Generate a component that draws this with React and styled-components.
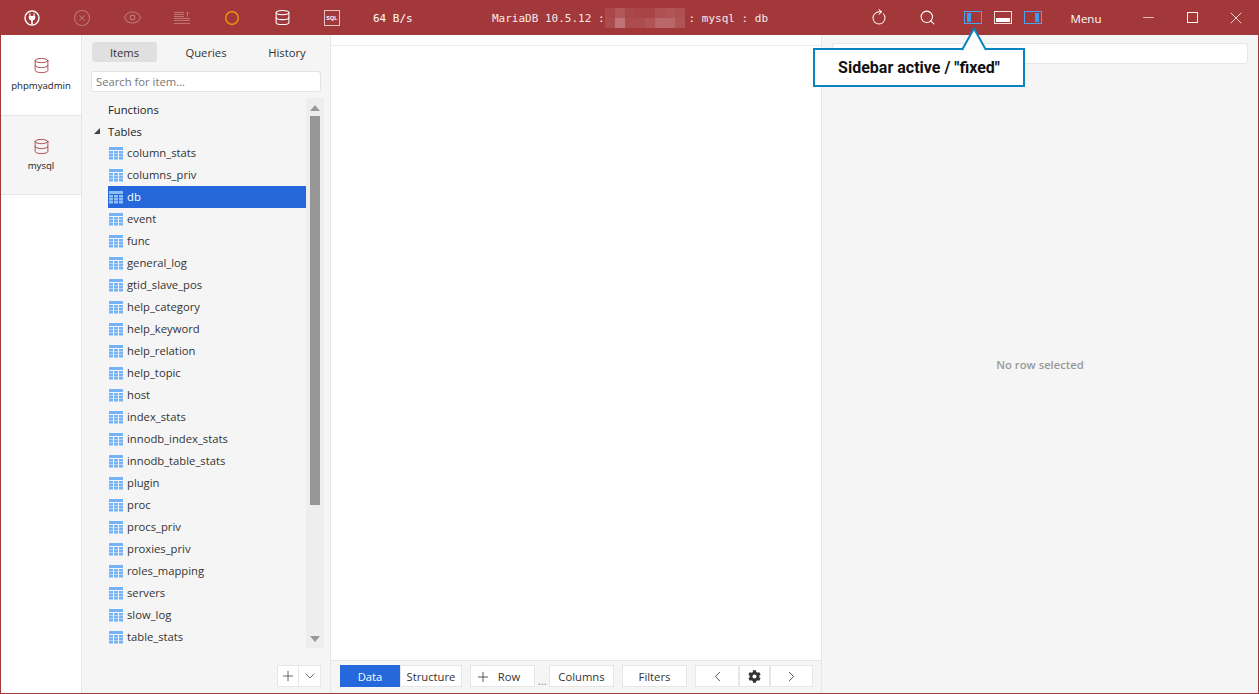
import React from "react";
import styled, {createGlobalStyle} from "styled-components";
import {CircleX, Eye, Database, RotateCw, Search, Minus, X, Plus, ChevronDown, ChevronLeft, ChevronRight} from "lucide-react";
import {FaCog} from "react-icons/fa";

const TABLES = [
    "column_stats", "columns_priv", "db", "event", "func", "general_log", "gtid_slave_pos",
    "help_category", "help_keyword", "help_relation", "help_topic", "host", "index_stats",
    "innodb_index_stats", "innodb_table_stats", "plugin", "proc", "procs_priv", "proxies_priv",
    "roles_mapping", "servers", "slow_log", "table_stats",
];

// pixelated block that hides the host name
const BLUR = [
    .08, .16, .08, .06, .06, .12, .14, .12,
    .1, .3, .1, .1, .14, .24, .24, .14,
];

const PlugIcon = () => (
    <svg width="16" height="16" viewBox="0 0 16 16">
        <circle cx="8" cy="8" r="7" fill="none" stroke="#fff" strokeWidth="1.4"/>
        <path d="M6 3.5v2.5M10 3.5v2.5" stroke="#fff" strokeWidth="1.2"/>
        <path d="M4.8 6h6.4v2.2a3.2 3.2 0 0 1-2.4 2.4V14H7.200v-3.400A3.200 3.200 0 0 1 4.800 8.200z" fill="#fff"/>
    </svg>
);

const ListIcon = () => (
    <svg width="16" height="14" viewBox="0 0 16 14" stroke="#fff" strokeWidth="1">
        <path d="M0 1.500h10M0 3.500h10M0 5.500h10M0 7.500h16M0 9.500h16M0 12.500h16"/>
        <path d="M13.500 5.500V1M12 2.500l1.500-1.500 1.500 1.500" fill="none"/>
    </svg>
);

const RingIcon = () => (
    <svg width="14" height="14" viewBox="0 0 14 14">
        <circle cx="7" cy="7" r="6.300" fill="none" stroke="#f59e0b" strokeWidth="1.300"/>
    </svg>
);

const TableIcon = ({$active}) => (
    <svg width="14" height="14" viewBox="0 0 14 14">
        <rect y="1" width="14" height="3" fill={$active ? "#8fc0f5" : "#74b3f7"}/>
        {[5, 8, 11].map(y => [0, 5, 10].map(x => (
            <rect key={`${x}-${y}`} x={x} y={y} width="4" height="2.500" fill={$active ? "#8fc0f5" : "#74b3f7"}/>
        )))}
    </svg>
);

const LayoutIcon = ({side}) => (
    <LayoutFrame $active={side !== "bottom"}>
        <LayoutFill $side={side}/>
    </LayoutFrame>
);

const App = () => {
    return (
        <Window>
            <GlobalStyle/>
            <TitleBar>
                <IconSlot><PlugIcon/></IconSlot>
                <IconSlot $dim><CircleX size={18} strokeWidth={1.400}/></IconSlot>
                <IconSlot $dim><Eye size={19} strokeWidth={1.400}/></IconSlot>
                <IconSlot $dim><ListIcon/></IconSlot>
                <IconSlot><RingIcon/></IconSlot>
                <IconSlot><Database size={17} strokeWidth={1.500}/></IconSlot>
                <IconSlot><SqlIcon><span>SQL</span></SqlIcon></IconSlot>
                <Speed>64 B/s</Speed>
                <Title>
                    MariaDB 10.5.12 :
                    <Pixelated>
                        {BLUR.map((a, i) => <i key={i} style={{opacity: a}}/>)}
                    </Pixelated>
                    : mysql : db
                </Title>
                <RightIcons>
                    <ToolIcon><RotateCw size={16} strokeWidth={1.500} style={{transform: "rotate(-45deg)"}}/></ToolIcon>
                    <ToolIcon><Search size={17} strokeWidth={1.500}/></ToolIcon>
                    <LayoutIcons>
                        <LayoutIcon side="left"/>
                        <LayoutIcon side="bottom"/>
                        <LayoutIcon side="right"/>
                    </LayoutIcons>
                    <MenuLabel>Menu</MenuLabel>
                    <WinButton><Minus size={17} strokeWidth={1}/></WinButton>
                    <WinButton><MaxBox/></WinButton>
                    <WinButton><X size={20} strokeWidth={1}/></WinButton>
                </RightIcons>
            </TitleBar>

            <Body>
                <Rail>
                    <RailItem $active>
                        <Database size={17} strokeWidth={1.200} color="#a3383b"/>
                        <span>phpmyadmin</span>
                    </RailItem>
                    <RailItem>
                        <Database size={17} strokeWidth={1.200} color="#a3383b"/>
                        <span>mysql</span>
                    </RailItem>
                    <RailRest/>
                </Rail>

                <Sidebar>
                    <Tabs>
                        <Tab $active $w="65px">Items</Tab>
                        <Tab $w="98px">Queries</Tab>
                        <Tab $w="64px">History</Tab>
                    </Tabs>
                    <SearchInput placeholder="Search for item..."/>
                    <TreeWrap>
                        <Tree>
                            <TreeHead>Functions</TreeHead>
                            <TreeHead><Caret/>Tables</TreeHead>
                            {TABLES.map(name => (
                                <TreeRow key={name} $active={name === "db"}>
                                    <TableIcon $active={name === "db"}/>
                                    <RowLabel>{name}</RowLabel>
                                </TreeRow>
                            ))}
                        </Tree>
                        <Scrollbar>
                            <ArrowUp/>
                            <Thumb/>
                            <ArrowDown/>
                        </Scrollbar>
                    </TreeWrap>
                    <SidebarFoot>
                        <SmallBtn><Plus size={16} strokeWidth={1.200}/></SmallBtn>
                        <SmallBtn><ChevronDown size={16} strokeWidth={1.200}/></SmallBtn>
                    </SidebarFoot>
                </Sidebar>

                <Main>
                    <MainHead/>
                    <MainBody/>
                    <BottomBar>
                        <Joined>
                            <BarBtn $primary $w="60px">Data</BarBtn>
                            <BarBtn $w="62px">Structure</BarBtn>
                        </Joined>
                        <BarBtn $w="65px" $ml="8px"><Plus size={16} strokeWidth={1.200}/><RowText>Row</RowText></BarBtn>
                        <Dots>...</Dots>
                        <BarBtn $w="65px">Columns</BarBtn>
                        <BarBtn $w="65px" $ml="8px">Filters</BarBtn>
                        <Joined $ml="8px">
                            <BarBtn $w="44px"><ChevronLeft size={17} strokeWidth={1.200}/></BarBtn>
                            <BarBtn $w="31px"><FaCog size={13} color="#333"/></BarBtn>
                            <BarBtn $w="43px"><ChevronRight size={17} strokeWidth={1.200}/></BarBtn>
                        </Joined>
                    </BottomBar>
                </Main>

                <Detail>
                    <DetailSearch/>
                    <Empty>No row selected</Empty>
                </Detail>
            </Body>

            <Callout>
                <CalloutArrow viewBox="0 0 26 24" width="26" height="24">
                    <path d="M1 23 L13 1.500 L25 23" fill="#fff" stroke="#0a84c1" strokeWidth="2"/>
                </CalloutArrow>
                Sidebar active / "fixed"
            </Callout>
        </Window>
    )
}

const GlobalStyle = createGlobalStyle`
  html, body {
    margin: 0;
    height: 100%;
    overflow: hidden;
  }

  body {
    font-family: "Open Sans", "Noto Sans", sans-serif;
    font-size: 11.25px;
    color: #333;
  }
`

const Window = styled('div')`
  position: relative;
  width: 1259px;
  height: 694px;
  box-sizing: border-box;
  border: 1px solid #a3383b;
  border-top: none;
  display: flex;
  flex-direction: column;
  background: #fff;
`

const TitleBar = styled('div')`
  height: 35px;
  flex: none;
  margin: 0 -1px;
  padding: 0 1px 0 7px;
  background: #a3383b;
  color: #fff;
  display: flex;
  align-items: center;
`

const IconSlot = styled('div')`
  width: 50px;
  height: 35px;
  display: flex;
  align-items: center;
  justify-content: center;
  color: #fff;
  opacity: ${p => p.$dim ? 0.3 : 1};
`

const SqlIcon = styled('div')`
  width: 12px;
  height: 12px;
  padding: 1px;
  border: 1px solid rgba(255, 255, 255, .7);
  display: flex;
  align-items: center;
  justify-content: center;

  span {
    font: bold 5.500px "Liberation Sans", sans-serif;
  }
`

const Speed = styled('div')`
  width: 135px;
  padding: 2px 0 0 16px;
  box-sizing: border-box;
  font: 11px "DejaVu Sans Mono", monospace;
  white-space: pre;
  color: #fff;
`

const Title = styled('div')`
  padding-top: 2px;
  font: 11px "DejaVu Sans Mono", monospace;
  color: #f6e9e9;
  display: flex;
  align-items: center;
  white-space: pre;
`

const Pixelated = styled('div')`
  display: grid;
  grid-template-columns: repeat(8, 10px);
  grid-auto-rows: 10px;
  margin: -2px 4px 0 0;

  i {
    display: block;
    background: #fff;
  }
`

const RightIcons = styled('div')`
  margin-left: auto;
  display: flex;
  align-items: center;
  height: 35px;
`

const ToolIcon = styled('div')`
  width: 48px;
  display: flex;
  justify-content: center;
  color: #fff;
`

const LayoutIcons = styled('div')`
  display: flex;
  gap: 12px;
  margin: 0 4px 0 13px;
`

const LayoutFrame = styled('div')`
  width: 18px;
  height: 13px;
  box-sizing: border-box;
  border: 1px solid ${p => p.$active ? "#4ba3f0" : "#f3dede"};
  position: relative;
`

const LayoutFill = styled('div')`
  position: absolute;
  background: ${p => p.$side === "bottom" ? "#fff" : "#3d9cf0"};
  ${p => p.$side === "left" && "left: 2px; top: 1px; bottom: 1px; width: 4px;"}
  ${p => p.$side === "right" && "right: 2px; top: 1px; bottom: 1px; width: 4px;"}
  ${p => p.$side === "bottom" && "left: 1px; right: 1px; bottom: 1px; height: 4px;"}
`

const MenuLabel = styled('div')`
  width: 80px;
  padding-top: 2px;
  text-align: center;
  font-size: 11.500px;
  color: #fff;
`

const WinButton = styled('div')`
  width: 44px;
  display: flex;
  justify-content: center;
  color: #fff;
  opacity: .95;
`

const MaxBox = styled('div')`
  width: 11px;
  height: 11px;
  box-sizing: border-box;
  border: 1px solid #fff;
`

const Body = styled('div')`
  flex: 1;
  min-height: 0;
  display: flex;
`

const Rail = styled('div')`
  width: 81px;
  flex: none;
  display: flex;
  flex-direction: column;
  background: #fff;
  border-right: 1px solid #e6e6e6;
  box-sizing: border-box;
`

const RailItem = styled('div')`
  height: ${p => p.$active ? "81px" : "79px"};
  box-sizing: border-box;
  padding-top: 22px;
  display: flex;
  flex-direction: column;
  align-items: center;
  gap: ${p => p.$active ? "5px" : "4px"};
  font-size: 9.600px;
  color: #222;
  background: ${p => p.$active ? "#fff" : "#f5f5f5"};
  border-bottom: 1px solid #e6e6e6;
`

const RailRest = styled('div')`
  flex: 1;
`

const Sidebar = styled('div')`
  width: 249px;
  flex: none;
  box-sizing: border-box;
  background: #f5f5f5;
  border-right: 1px solid #e6e6e6;
  padding: 7px 9px 0;
  display: flex;
  flex-direction: column;
`

const Tabs = styled('div')`
  display: flex;
  padding-left: 1px;
  height: 20px;
`

const Tab = styled('div')`
  width: ${p => p.$w};
  display: flex;
  align-items: center;
  justify-content: center;
  border-radius: 3px;
  color: #333;
  background: ${p => p.$active ? "#e0e0e0" : "transparent"};
`

const SearchInput = styled('input')`
  margin-top: 9px;
  height: 21px;
  width: 230px;
  box-sizing: border-box;
  padding: 0 4px;
  border: 1px solid #e3e3e3;
  border-radius: 3px;
  background: #fff;
  outline: none;
  font: 11.250px "Open Sans", sans-serif;

  &::placeholder {
    color: #777;
  }
`

const TreeWrap = styled('div')`
  margin-top: 6px;
  height: 550px;
  display: flex;
  flex: none;
  width: 233px;
`

const Tree = styled('div')`
  width: 215px;
  flex: none;
  box-sizing: border-box;
  padding-left: 17px;
  overflow: hidden;
`

const TreeHead = styled('div')`
  height: 22px;
  display: flex;
  align-items: center;
  position: relative;
  font-weight: 500;
  color: #222;
`

const Caret = styled('i')`
  position: absolute;
  left: -14px;
  top: 8px;
  width: 0;
  height: 0;
  border-style: solid;
  border-width: 0 0 6px 6px;
  border-color: transparent transparent #444 transparent;
`

const TreeRow = styled('div')`
  height: 22px;
  box-sizing: border-box;
  padding-left: 1px;
  display: flex;
  align-items: center;
  gap: 4px;
  white-space: nowrap;
  color: ${p => p.$active ? "#fff" : "#333"};
  background: ${p => p.$active ? "#2468dc" : "transparent"};
`

const RowLabel = styled('span')`
  margin-bottom: 2px;
`

const Scrollbar = styled('div')`
  width: 18px;
  flex: none;
  background: #eeeeee;
  display: flex;
  flex-direction: column;
  align-items: center;
`

const ArrowUp = styled('i')`
  margin: 7px 0 5px;
  width: 0;
  height: 0;
  border-style: solid;
  border-width: 0 5px 6px 5px;
  border-color: transparent transparent #999 transparent;
`

const ArrowDown = styled('i')`
  margin-top: auto;
  margin-bottom: 6px;
  width: 0;
  height: 0;
  border-style: solid;
  border-width: 6px 5px 0 5px;
  border-color: #999 transparent transparent transparent;
`

const Thumb = styled('div')`
  width: 10px;
  height: 389px;
  background: #969696;
`

const SidebarFoot = styled('div')`
  margin-top: 17px;
  display: flex;
  justify-content: flex-end;
`

const SmallBtn = styled('div')`
  width: 22px;
  height: 22px;
  background: #fff;
  border: 1px solid #e6e6e6;
  box-sizing: border-box;
  display: flex;
  align-items: center;
  justify-content: center;
  color: #444;

  & + & {
    border-left: none;
  }
`

const Main = styled('div')`
  width: 491px;
  flex: none;
  box-sizing: border-box;
  border-right: 1px solid #e6e6e6;
  display: flex;
  flex-direction: column;
`

const MainHead = styled('div')`
  height: 10px;
  flex: none;
  border-bottom: 1px solid #ececec;
`

const MainBody = styled('div')`
  flex: 1;
`

const BottomBar = styled('div')`
  height: 33px;
  flex: none;
  box-sizing: border-box;
  background: #f5f5f5;
  border-top: 1px solid #e6e6e6;
  padding: 4px 0 0 9px;
  display: flex;
  align-items: flex-start;
`

const Joined = styled('div')`
  display: flex;
  margin-left: ${p => p.$ml || 0};
`

const BarBtn = styled('div')`
  width: ${p => p.$w};
  margin-left: ${p => p.$ml || 0};
  height: 22px;
  padding-top: 1px;
  box-sizing: border-box;
  background: ${p => p.$primary ? "#2468dc" : "#fff"};
  color: ${p => p.$primary ? "#fff" : "#333"};
  border: 1px solid ${p => p.$primary ? "#2468dc" : "#e6e6e6"};
  display: flex;
  align-items: center;
  justify-content: center;

  ${Joined} & + & {
    border-left: none;
  }
`

const RowText = styled('span')`
  margin: 0 10px 0 7px;
`

const Dots = styled('div')`
  width: 14px;
  padding-left: 3px;
  box-sizing: border-box;
  align-self: flex-end;
  margin-bottom: 5px;
  color: #888;
  font-size: 11px;
`

const Detail = styled('div')`
  flex: 1;
  background: #f5f5f5;
  padding: 8px 10px 0;
  display: flex;
  flex-direction: column;
`

const DetailSearch = styled('div')`
  height: 21px;
  flex: none;
  background: #fff;
  border: 1px solid #e6e6e6;
  border-radius: 3px;
  box-sizing: border-box;
`

const Empty = styled('div')`
  margin-top: 293px;
  text-align: center;
  font-weight: 600;
  color: #999;
`

const Callout = styled('div')`
  position: absolute;
  left: 812px;
  top: 48px;
  width: 212px;
  height: 39px;
  box-sizing: border-box;
  background: #fff;
  border: 2px solid #0a84c1;
  display: flex;
  align-items: center;
  justify-content: center;
  font: 700 16px Roboto, sans-serif;
  color: #111;
`

const CalloutArrow = styled('svg')`
  position: absolute;
  left: 146px;
  top: -23px;
`

export default App;
